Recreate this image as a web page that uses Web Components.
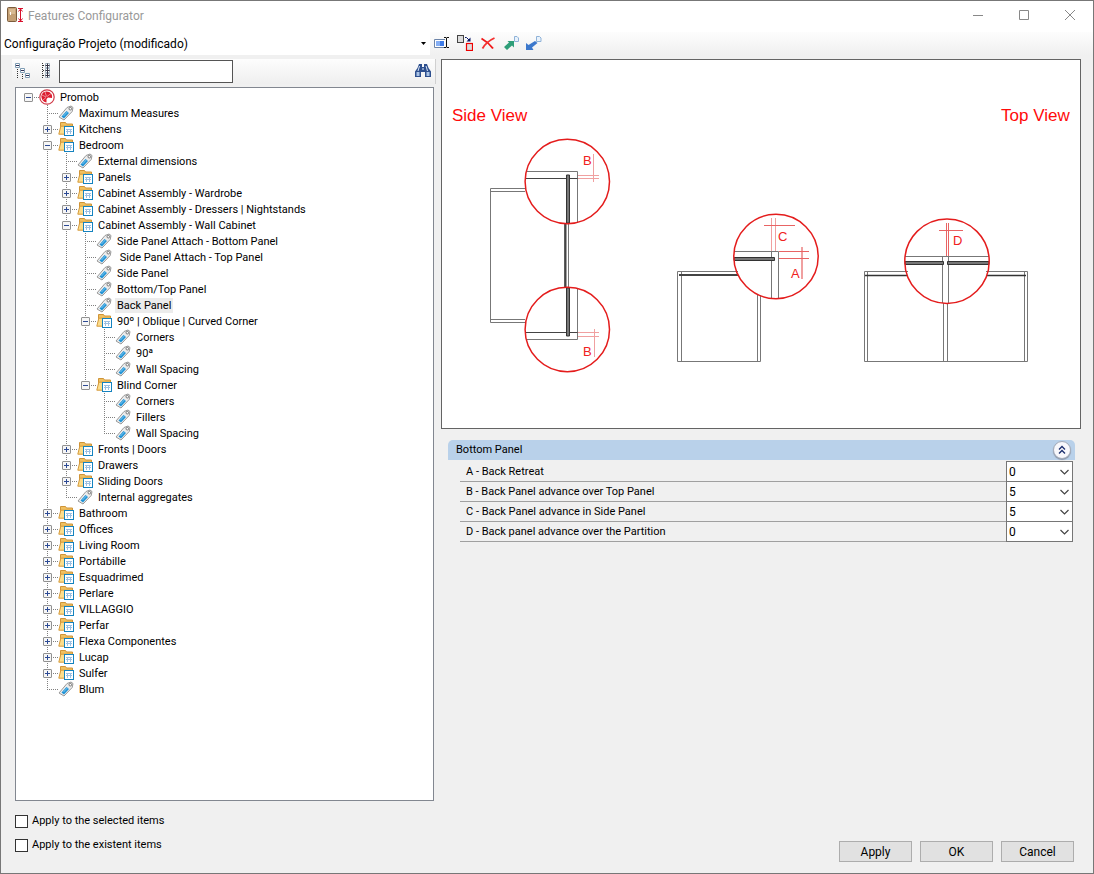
<!DOCTYPE html>
<html lang="en">
<head>
<meta charset="utf-8">
<title>Features Configurator</title>
<style>
html, body { margin: 0; height: 100%; }
body { font: 11px/16px Roboto, "Liberation Sans", sans-serif; color: #000; background: #f0f0f0; }
</style>
</head>
<body>
<app-window>
  <title-bar slot="title">Features Configurator</title-bar>
  <project-bar slot="bar"></project-bar>
  <search-bar slot="left"></search-bar>
  <tree-view slot="left">
    <tree-item kind="root" label="Promob">
      <tree-item label="Maximum Measures"></tree-item>
      <tree-item kind="folder" label="Kitchens" closed></tree-item>
      <tree-item kind="folder" label="Bedroom">
        <tree-item label="External dimensions"></tree-item>
        <tree-item kind="folder" label="Panels" closed></tree-item>
        <tree-item kind="folder" label="Cabinet Assembly - Wardrobe" closed></tree-item>
        <tree-item kind="folder" label="Cabinet Assembly - Dressers | Nightstands" closed></tree-item>
        <tree-item kind="folder" label="Cabinet Assembly - Wall Cabinet">
          <tree-item label="Side Panel Attach - Bottom Panel"></tree-item>
          <tree-item label=" Side Panel Attach - Top Panel"></tree-item>
          <tree-item label="Side Panel"></tree-item>
          <tree-item label="Bottom/Top Panel"></tree-item>
          <tree-item label="Back Panel" selected></tree-item>
          <tree-item kind="folder" label="90º | Oblique | Curved Corner">
            <tree-item label="Corners"></tree-item>
            <tree-item label="90ª"></tree-item>
            <tree-item label="Wall Spacing"></tree-item>
          </tree-item>
          <tree-item kind="folder" label="Blind Corner">
            <tree-item label="Corners"></tree-item>
            <tree-item label="Fillers"></tree-item>
            <tree-item label="Wall Spacing"></tree-item>
          </tree-item>
        </tree-item>
        <tree-item kind="folder" label="Fronts | Doors" closed></tree-item>
        <tree-item kind="folder" label="Drawers" closed></tree-item>
        <tree-item kind="folder" label="Sliding Doors" closed></tree-item>
        <tree-item label="Internal aggregates"></tree-item>
      </tree-item>
      <tree-item kind="folder" label="Bathroom" closed></tree-item>
      <tree-item kind="folder" label="Offices" closed></tree-item>
      <tree-item kind="folder" label="Living Room" closed></tree-item>
      <tree-item kind="folder" label="Portábille" closed></tree-item>
      <tree-item kind="folder" label="Esquadrimed" closed></tree-item>
      <tree-item kind="folder" label="Perlare" closed></tree-item>
      <tree-item kind="folder" label="VILLAGGIO" closed></tree-item>
      <tree-item kind="folder" label="Perfar" closed></tree-item>
      <tree-item kind="folder" label="Flexa Componentes" closed></tree-item>
      <tree-item kind="folder" label="Lucap" closed></tree-item>
      <tree-item kind="folder" label="Sulfer" closed></tree-item>
      <tree-item label="Blum"></tree-item>
    </tree-item>
  </tree-view>
  <check-list slot="left">
    <check-option>Apply to the selected items</check-option>
    <check-option>Apply to the existent items</check-option>
  </check-list>
  <view-diagram slot="right"></view-diagram>
  <property-group slot="right" heading="Bottom Panel">
    <property-row value="0">A - Back Retreat</property-row>
    <property-row value="5">B - Back Panel advance over Top Panel</property-row>
    <property-row value="5">C - Back Panel advance in Side Panel</property-row>
    <property-row value="0">D - Back panel advance over the Partition</property-row>
  </property-group>
  <button-row slot="right">
    <push-button>Apply</push-button>
    <push-button>OK</push-button>
    <push-button>Cancel</push-button>
  </button-row>
</app-window>

<script>
const define = (name, html, setup) => customElements.define(name, class extends HTMLElement {
  constructor() {
    super();
    this.attachShadow({ mode: 'open' });
  }
  connectedCallback() {
    if (this.shadowRoot.childNodes.length) return;
    this.shadowRoot.innerHTML = html;
    if (setup) setup(this, this.shadowRoot);
  }
});

define('app-window', `
<style>
:host { display: flex; flex-direction: column; box-sizing: border-box; min-height: 100vh; border: 1px solid #777; background: #f0f0f0; }
main { flex: 1; display: grid; grid-template-columns: minmax(300px, 433px) minmax(0, 1fr); column-gap: 7px; padding: 4px 12px 11px 0; }
section { display: flex; flex-direction: column; min-width: 0; }
</style>
<slot name="title"></slot>
<slot name="bar"></slot>
<main>
  <section><slot name="left"></slot></section>
  <section><slot name="right"></slot></section>
</main>`);

define('title-bar', `
<style>
:host { display: flex; align-items: flex-start; height: 31px; background: #fff; color: #999; font-size: 12px; }
.logo { margin: 6px 5px 0 6px; }
h1 { flex: 1; margin: 0; font: inherit; line-height: 30px; }
button { border: 0; background: none; padding: 0; width: 46px; height: 28px; display: grid; place-items: center; }
.buttons { display: flex; }
svg { display: block; }
</style>
<svg class="logo" width="16" height="16" viewBox="0 0 16 16" aria-hidden="true">
  <rect x=".5" y=".5" width="9" height="14" rx="1" fill="#c4a075" stroke="#7b5c3c"/>
  <path d="M2 2h6v5H2z" fill="#d8ba92"/><path d="M3.500 5v3" stroke="#fff"/>
  <path d="M11 1.500h5M11 14.500h5M13.500 2v12M11.500 4.500l2-2.500 2 2.500M11.500 11.500l2 2.500 2-2.500" stroke="#d8102c" fill="none"/>
</svg>
<h1><slot></slot></h1>
<div class="buttons">
  <button aria-label="Minimize"><svg width="12" height="12"><path d="M1 6.500h10" stroke="#888"/></svg></button>
  <button aria-label="Maximize"><svg width="12" height="12"><path d="M1.500 1.500h9v9h-9z" stroke="#888" fill="none"/></svg></button>
  <button aria-label="Close"><svg width="12" height="12"><path d="M1 1l10 10M11 1L1 11" stroke="#888" fill="none"/></svg></button>
</div>`);

define('project-bar', `
<style>
:host { display: flex; align-items: center; height: 23px; background: linear-gradient(#fdfdfd, #f0f0f0); }
.combo { position: relative; width: 429px; height: 23px; background: #fff; }
select { appearance: none; width: 100%; height: 23px; border: 0; padding: 0 0 0 3px; background: none; font: 12px/16px Roboto, "Liberation Sans", sans-serif; color: #000; }
.combo svg { position: absolute; right: 4px; top: 10px; pointer-events: none; }
.tools { display: flex; gap: 7px; padding: 0 0 2px 4px; }
button { border: 0; padding: 0; background: none; width: 16px; height: 16px; }
button svg { display: block; }
</style>
<div class="combo">
  <select aria-label="Project"><option>Configuração Projeto (modificado)</option></select>
  <svg width="5" height="3"><path d="M0 0h5L2.500 3z"/></svg>
</div>
<div class="tools">
  <button aria-label="Rename"><svg width="16" height="16"><path d="M11 4.500H.5v8H11" fill="#fff" stroke="#6c84a8"/><path d="M2 6h8v5H2z" fill="#3f7ce8"/><path d="M2 6h4v5H2z" fill="#85aef4"/><path d="M10 2.500h2l.5.500.5-.5h2M10 12.500h2l.5-.5.5.500h2M12.500 3v9" stroke="#111" fill="none"/></svg></button>
  <button aria-label="Replace"><svg width="16" height="16"><rect x=".5" y=".5" width="6" height="7" fill="#ddd" stroke="#444"/><rect x="9.500" y="8.500" width="6" height="7" fill="#ddd" stroke="#e00" stroke-width="1.200"/><path d="M8 2.500h1.500l3 3" stroke="#0a1a6a" fill="none"/><path d="M13.500 2.500v4h-4z" fill="#0a1a6a"/></svg></button>
  <button aria-label="Delete"><svg width="16" height="16"><path d="M1.500 3.500C6 6 10 9.500 13 13.500" stroke="#f01818" stroke-width="2" fill="none"/><path d="M14.500 3C9 5.500 5 9 2.500 13.500" stroke="#f43030" stroke-width="1.800" fill="none"/></svg></button>
  <button aria-label="Export"><svg width="16" height="16"><path d="M1 12l5-4.500L4.500 6H11v6.500L9 10.500 4 15z" fill="#2e9e78"/><path d="M11.500 1.500h2.500l1.500 1.500v3.500h-4z" fill="#e8f2fc" stroke="#8fb2d8"/></svg></button>
  <button aria-label="Import"><svg width="16" height="16"><path d="M9 6l2.500 2L6 12.500 7.500 15H0V8l2.500 2z" fill="#3c78cc"/><path d="M10.500 1.500h3l1.500 1.500v3.500h-4.500z" fill="#e8f2fc" stroke="#8fb2d8"/></svg></button>
</div>`);

define('search-bar', `
<style>
:host { display: flex; align-items: center; height: 25px; margin: 0 -2px 3px 11px; padding: 0 4px 0 3px; background: linear-gradient(#fdfdfd, #efefef); border-right: 1px solid #d0d0d0; }
button { border: 0; padding: 0 0 2px; background: none; width: 16px; height: 18px; margin-right: 8px; }
button:last-child { margin: 0 0 0 auto; }
input { box-sizing: border-box; width: 174px; height: 23px; margin-left: -4px; padding: 0 4px; border: 1px solid #555; background: #fff; font: inherit; }
svg { display: block; }
</style>
<button aria-label="Collapse all"><svg width="16" height="16" fill="none"><path d="M2.500 6v10M7.500 11v5M5 7.500h1M10 12.500h1" stroke="#333" stroke-dasharray="1 1"/><path d="M.5 .5h4v4h-4zM5.500 5.500h4v4h-4zM10.500 10.500h4v4h-4z" fill="#fff" stroke="#7f9cb4"/><path d="M1 2.500h3M6 7.500h3M11 12.500h3" stroke="#335"/></svg></button>
<button aria-label="Expand all"><svg width="16" height="16" fill="none"><path d="M3.500 0v16M4 2.500h3M4 7.500h3M4 12.500h3" stroke="#333" stroke-dasharray="1 1"/><path d="M6.500 .5h4v4h-4zM6.500 5.500h4v4h-4zM6.500 10.500h4v4h-4z" fill="#fff" stroke="#a3b3c0"/><path d="M6.500 2.500h4M8.500 .5v14M6.500 7.500h4M6.500 12.500h4" stroke="#334"/></svg></button>
<input type="text" aria-label="Search">
<button aria-label="Find"><svg width="16" height="16"><path d="M4 1h3v3h2V1h3l1.500 4L16 8.500V14h-6V9H6v5H0V8.500L2.500 5z" fill="#2d4f8e"/><path d="M1.500 9h3v4h-3zM11.500 9h3v4h-3z" fill="#a9c3e6"/><path d="M4.500 3L3 8M11 3l1.500 5M7 6h2" stroke="#dce8f8"/></svg></button>`);

define('tree-view', `
<style>
:host { display: block; flex: 1; margin-left: 14px; box-sizing: border-box; border: 1px solid #828790; background: #fff; padding: 1px 3px; overflow: hidden; }
</style>
<div role="tree" aria-label="Features"><slot></slot></div>`);

const ICONS = {
  root: '<circle cx="8" cy="8" r="7.200" fill="#fff" stroke="#d03a48" stroke-width="1.200"/><path d="M7.500 2.500C4 2.500 2 5.500 2.500 8.500c.5 3 2.500 4.800 5 5V10l1.500-1.500 4 .5c.8-3.500-1.500-6.500-5.500-6.500z" fill="#dc1c2e"/><path d="M3 6l4 2M4 11l3-2.500M6 3l1.500 4.500M8 7.500l4-3" stroke="#fff" stroke-width=".5"/>',
  folder: '<path d="M2.500 12.500V1.500h5l1 1.500h6v9.500z" fill="#f0c060" stroke="#cf9438"/><path d="M.8 13.200l2-8h11.400v8z" fill="#fcdd8c" stroke="#d59a3c"/><rect x="6.500" y="5.500" width="9" height="9" fill="#fff" stroke="#1583bf"/><path d="M8 8.500h6M8 10.500h6M9.500 8v5M12.500 8v5" stroke="#9cc0e2"/>',
  tag: '<path d="M1 12L9 2.500l4-1.500L15 2.500l-.8 4L6 15z" fill="#ececec" stroke="#999"/><circle cx="12.300" cy="3.700" r="1.300" fill="#fff" stroke="#777"/><path d="M3.500 11.500l5-5.500L11 8l-5 5.500z" fill="#1f93d6"/><path d="M5.500 11l4-4.200" stroke="#7cc6f0"/>'
};

define('tree-item', `
<style>
:host { display: block; background: repeating-linear-gradient(#808080 0 1px, transparent 1px 2px) 9px 0 / 1px 100% no-repeat; }
:host(:last-child) { background-size: 1px 8px; }
:host([kind="root"]) { background: none; }
.row { display: flex; align-items: center; height: 16px; }
.joint { flex: none; width: 20px; height: 16px; display: flex; align-items: center; padding-left: 5px; box-sizing: border-box; background: repeating-linear-gradient(90deg, #808080 0 1px, transparent 1px 2px) 9px 8px / 11px 1px no-repeat; }
.joint button { box-sizing: border-box; width: 9px; height: 9px; padding: 0; margin-top: 1px; border: 1px solid #919191; border-radius: 1px; background: #f6f6f6; }
button svg { display: block; }
:host(:not([closed])) .v { display: none; }
.icon { flex: none; }
.label { margin-left: 3px; padding: 0 2px; height: 15px; line-height: 15px; white-space: pre; }
:host([selected]) .label { background: #ececec; }
.children { margin-left: 19px; }
:host([closed]) .children { display: none; }
</style>
<div class="row"><span class="joint"></span><svg class="icon" width="16" height="16" viewBox="0 0 16 16" aria-hidden="true"></svg><span class="label"></span></div>
<div class="children" role="group"><slot></slot></div>`, (el, root) => {
  const kind = el.getAttribute('kind') || 'tag';
  el.setAttribute('role', 'treeitem');
  root.querySelector('.icon').innerHTML = ICONS[kind];
  root.querySelector('.label').textContent = el.getAttribute('label');
  if (kind === 'tag') return;
  const button = document.createElement('button');
  button.setAttribute('aria-label', 'Toggle ' + el.getAttribute('label'));
  button.innerHTML = '<svg width="7" height="7"><path d="M1 3.500h5" stroke="#2c4a94"/><path class="v" d="M3.500 1v5" stroke="#2c4a94"/></svg>';
  button.onclick = () => el.toggleAttribute('closed');
  root.querySelector('.joint').append(button);
});

define('check-list', `
<style>:host { display: flex; flex-direction: column; gap: 8px; margin: 12px 0 9px 14px; }</style>
<slot></slot>`);

define('check-option', `
<style>
:host { display: block; }
label { display: flex; align-items: center; gap: 4px; width: fit-content; height: 16px; }
input { appearance: none; margin: 0; box-sizing: border-box; width: 13px; height: 13px; border: 1px solid #333; background: #fff; }
input:checked { background: #333; box-shadow: inset 0 0 0 2px #fff; }
</style>
<label><input type="checkbox"><span><slot></slot></span></label>`);

define('view-diagram', `
<style>
:host { display: block; border: 1px solid #646464; background: #fff; }
svg { display: block; width: 100%; height: auto; }
text { font-family: "Liberation Sans", Arial, sans-serif; fill: #f02020; font-size: 13px; }
.title { font-size: 17px; fill: #ff0a0a; }
.g { stroke: #777; fill: none; }
.d { stroke: #444; fill: none; }
.bar { fill: #777; stroke: #333; }
.r { stroke: #f0a0a0; fill: none; }
.s { stroke: #e86464; fill: none; }
circle { fill: none; stroke: #e41c1c; stroke-width: 1.500; }
</style>
<svg viewBox="442 60 638 368" role="img" aria-label="Side and top views of the cabinet">
  <text class="title" x="452" y="121">Side View</text>
  <text class="title" x="1001" y="121">Top View</text>

  <path class="g" d="M525 188.500H490.500V322.500H525M490.500 191.500H525M490.500 319.500H525"/>
  <path class="g" d="M564.500 223V288M568.500 223V288"/><path d="M565.500 223V288" stroke="#444" stroke-width="2"/>
  <path class="g" d="M527 171.500H577.500V222M577.500 289V339.500H527"/>
  <path class="d" d="M525 178.500H577.500M525 332.500H577.500"/>
  <path class="bar" d="M566.500 175H569.500V223H566.500zM566.500 288H569.500V336H566.500z"/>
  <path class="r" d="M578 175.500H599M578 178.500H599M593.500 154V182M578 332.500H599M578 336.500H599M594.500 329V357"/>
  <circle cx="567.300" cy="181.500" r="42.200"/><circle cx="567.300" cy="329.500" r="42.200"/>
  <text x="583" y="165">B</text><text x="583" y="356">B</text>

  <path class="g" d="M738 271.500H677.500V361.500H760.500V295M681.500 272V361M757.500 294V361"/>
  <path d="M679 275H738" stroke="#444" stroke-width="2"/>
  <path class="g" d="M735 251.500H778.500V298M771.500 251.500V298"/>
  <path class="bar" d="M734 257.500H774.500V260.500H734z"/>
  <path class="r" d="M771.500 218V251M775.500 218V251M801.500 247V279M802.500 247V279"/>
  <path class="s" d="M764 225.500H795M779 251.500H809M779 258.500H809"/>
  <circle cx="776" cy="256.500" r="42.200"/>
  <text x="778" y="241">C</text><text x="791" y="278">A</text>

  <path class="g" d="M908 271.500H864.500V361.500H1027.500V271.500H986M867.500 272V361M1024.500 272V361M943.500 303V361M947.500 303V361"/>
  <path d="M865 275.500H907M987 275.500H1026" stroke="#333" stroke-width="1.500"/>
  <path class="g" d="M905 256.500H989M942.500 256.500V303M948.500 256.500V303"/>
  <path class="bar" d="M905 261.500H943.500V264.500H905zM947.500 261.500H989V264.500H947.500z"/>
  <path class="s" d="M946.500 223V256M948.500 223V256M939 230.500H963"/>
  <circle cx="947" cy="261.200" r="42.200"/>
  <text x="953" y="245">D</text>
</svg>`);

define('property-group', `
<style>
:host { display: block; margin: 11px 6px 0 7px; }
header { display: flex; align-items: center; justify-content: space-between; height: 20px; padding: 0 4px 0 8px; background: #b9d1ea; border-radius: 5px 5px 0 0; }
h2 { margin: 0; font: inherit; }
header button { box-sizing: border-box; width: 18px; height: 18px; margin: 0; padding: 0; border: 1px solid #a4acba; border-radius: 50%; background: #f8f8fc; box-shadow: 0 1px 1px #8a94a6; display: grid; place-items: center; }
.rows { margin: 2px 2px 0 12px; }
.rows[hidden] { display: none; }
</style>
<header><h2></h2><button aria-label="Collapse group"><svg width="8" height="10"><path d="M1 4.500l3-3 3 3M1 8.500l3-3 3 3" fill="none" stroke="#1c2f6e" stroke-width="1.300"/></svg></button></header>
<div class="rows"><slot></slot></div>`, (el, root) => {
  root.querySelector('h2').textContent = el.getAttribute('heading');
  const rows = root.querySelector('.rows');
  root.querySelector('button').onclick = () => { rows.hidden = !rows.hidden; };
});

define('property-row', `
<style>
:host { display: flex; height: 20px; }
label { flex: 1; padding-left: 6px; line-height: 20px; border-bottom: 1px solid #a0a0a0; }
.box { position: relative; width: 67px; height: 21px; margin-top: -1px; }
select { appearance: none; box-sizing: border-box; width: 100%; height: 21px; margin: 0; padding: 0 0 0 2px; border: 1px solid #767676; border-radius: 0; background: #fff; font: 12px/16px Roboto, "Liberation Sans", sans-serif; color: #000; display: block; }
svg { position: absolute; right: 4px; top: 8px; pointer-events: none; }
</style>
<label for="value"><slot></slot></label>
<div class="box"><select id="value"></select><svg width="9" height="6"><path d="M.5 1l4 4 4-4" stroke="#444" stroke-width="1.200" fill="none"/></svg></div>`, (el, root) => {
  root.querySelector('select').append(new Option(el.getAttribute('value')));
});

define('button-row', `
<style>:host { display: flex; justify-content: flex-end; gap: 8px; margin-top: auto; padding-right: 7px; }</style>
<slot></slot>`);

define('push-button', `
<style>
:host { display: block; }
button { box-sizing: border-box; width: 73px; height: 21px; padding: 0; border: 1px solid #adadad; background: #e1e1e1; font: 12px/16px Roboto, "Liberation Sans", sans-serif; color: #000; }
</style>
<button><slot></slot></button>`);
</script>
</body>
</html>
